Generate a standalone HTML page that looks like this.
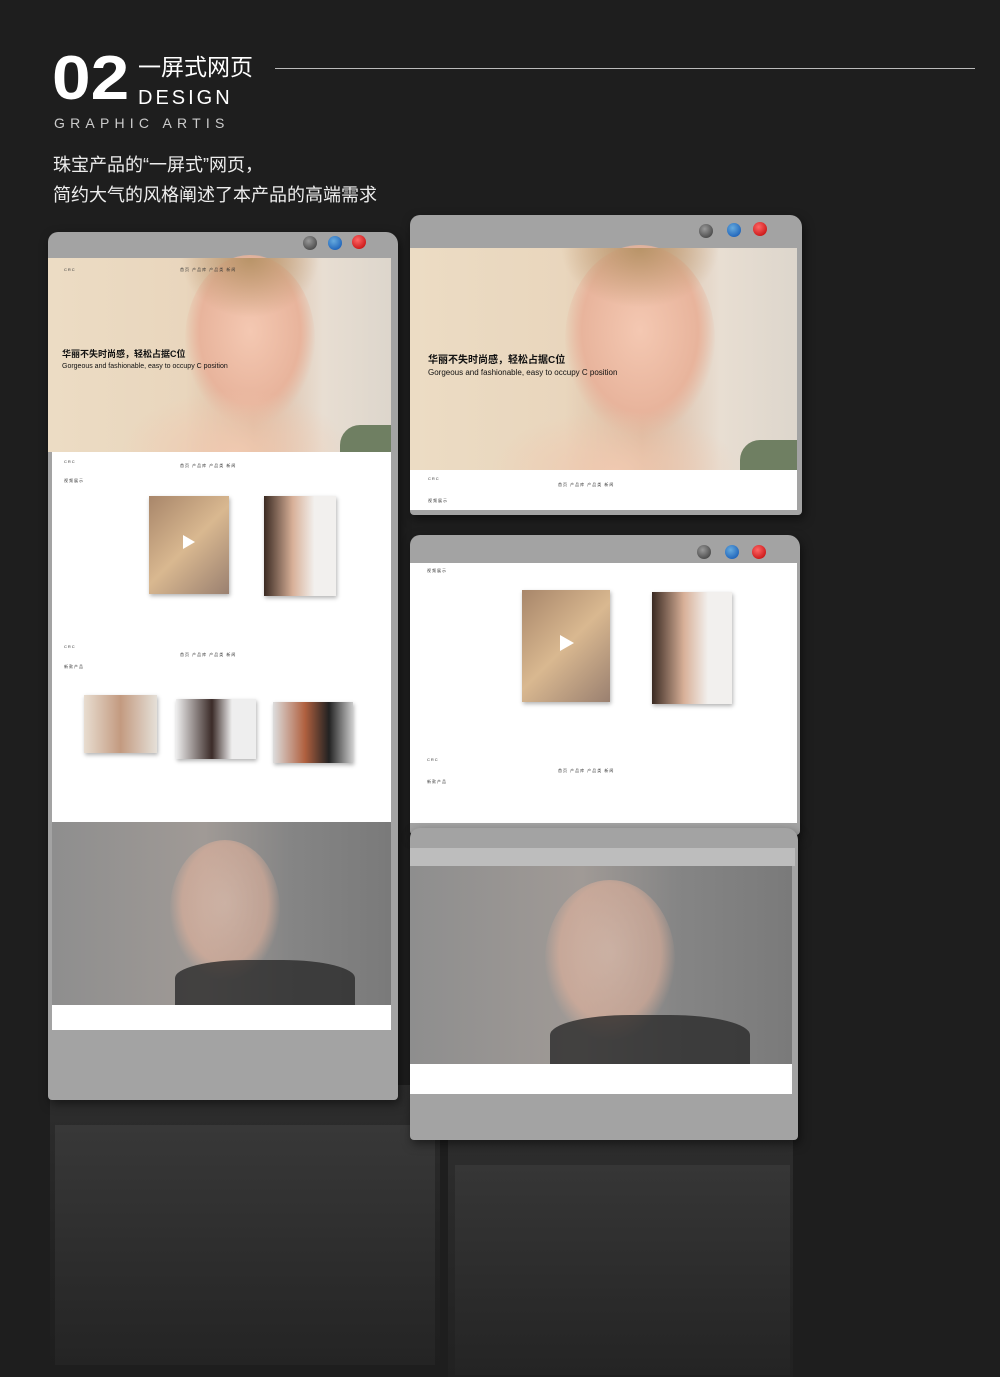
<!DOCTYPE html>
<html><head><meta charset="utf-8"><style>
*{margin:0;padding:0;box-sizing:border-box}
body{width:1000px;height:1377px;background:#1e1e1e;position:relative;overflow:hidden;font-family:"Liberation Sans","Noto Sans CJK SC",sans-serif;color:#fff}
.a{position:absolute}
.frame{position:absolute;background:#a3a3a3;border-radius:10px 12px 4px 4px;box-shadow:2px 4px 10px rgba(0,0,0,.5)}
.btn{position:absolute;width:14px;height:14px;border-radius:50%}
.g{background:radial-gradient(circle at 40% 35%,#999,#333)}
.b{background:radial-gradient(circle at 40% 35%,#6ad,#0a4fb0)}
.r{background:radial-gradient(circle at 40% 35%,#f66,#b00)}
.hero{background:linear-gradient(90deg,#ecdcc4 0%,#e9d6bd 40%,#d9b69c 60%,#e8ded2 80%,#ddd6cc 100%)}
.face{position:absolute;border-radius:50%;background:radial-gradient(ellipse at 50% 45%,#f4c8b2 0%,#e8b49c 55%,rgba(220,170,140,0) 72%)}
.gray{background:linear-gradient(90deg,#8e8e8e,#a09a96 45%,#858585 70%,#7a7a7a)}
.t{position:absolute;color:#111;font-size:8px;font-weight:bold}
.s{position:absolute;color:#333;font-size:4px;letter-spacing:1px}
.ph{position:absolute;box-shadow:1px 2px 4px rgba(0,0,0,.3)}
</style></head><body>
<div class="a" style="left:52px;top:44px;font-size:62px;font-weight:bold;line-height:70px;transform:scaleX(1.12);transform-origin:left">02</div>
<div class="a" style="left:138px;top:53px;font-size:23px;line-height:28px">一屏式网页</div>
<div class="a" style="left:138px;top:86px;font-size:20px;letter-spacing:3px;line-height:24px">DESIGN</div>
<div class="a" style="left:275px;top:68px;width:700px;height:1px;background:#bbb"></div>
<div class="a" style="left:54px;top:115px;font-size:14px;letter-spacing:5.2px;color:#ccc">GRAPHIC ARTIS</div>
<div class="a" style="left:53px;top:150px;font-size:18px;line-height:30px;color:#eee">珠宝产品的“一屏式”网页，<br>简约大气的风格阐述了本产品的高端需求</div>

<!-- reflections -->
<div class="a" style="left:50px;top:1085px;width:390px;height:292px;background:linear-gradient(#2e2e2e,#222 60%,#1e1e1e)"></div>
<div class="a" style="left:55px;top:1125px;width:380px;height:240px;background:linear-gradient(#383838,#242424)"></div>
<div class="a" style="left:448px;top:1125px;width:345px;height:252px;background:linear-gradient(#2e2e2e,#212121)"></div>
<div class="a" style="left:455px;top:1165px;width:335px;height:210px;background:linear-gradient(#363636,#242424)"></div>

<!-- left panel -->
<div class="frame" style="left:48px;top:232px;width:350px;height:868px"></div>
<div class="btn g" style="left:303px;top:236px"></div><div class="btn b" style="left:328px;top:236px"></div><div class="btn r" style="left:352px;top:235px"></div>
<div class="a hero" style="left:48px;top:258px;width:343px;height:194px"></div>
<div class="face" style="left:185px;top:255px;width:130px;height:170px"></div>
<div class="a" style="left:180px;top:258px;width:140px;height:60px;background:radial-gradient(ellipse at 50% 0%,#b89468,rgba(184,148,104,0) 70%)"></div>
<div class="a" style="left:120px;top:390px;width:230px;height:62px;background:radial-gradient(ellipse at 50% 100%,#f0c9b0,rgba(240,200,175,0) 70%)"></div>
<div class="a" style="left:340px;top:425px;width:51px;height:27px;background:#6f7f62;border-radius:20px 0 0 0"></div>
<div class="t" style="left:62px;top:347px;font-size:9px">华丽不失时尚感，轻松占据C位</div>
<div class="t" style="left:62px;top:363px;font-size:7px;font-weight:normal">Gorgeous and fashionable, easy to occupy C position</div>
<div class="s" style="left:64px;top:267px">CRC</div><div class="s" style="left:180px;top:267px">首页 产品库 产品类 新闻</div>
<div class="a" style="left:52px;top:452px;width:339px;height:370px;background:#fff"></div>
<div class="s" style="left:64px;top:459px">CRC</div><div class="s" style="left:180px;top:463px">首页 产品库 产品类 新闻</div>
<div class="s" style="left:64px;top:478px">视频展示</div>
<div class="ph" style="left:149px;top:496px;width:80px;height:98px;background:linear-gradient(135deg,#a8866a,#d9b890 50%,#9a8070)"></div>
<div class="a" style="left:183px;top:535px;border-left:12px solid #fff;border-top:7px solid transparent;border-bottom:7px solid transparent"></div>
<div class="ph" style="left:264px;top:496px;width:72px;height:100px;background:linear-gradient(90deg,#3a2a22,#d8b098 40%,#f2f0ee 70%)"></div>
<div class="s" style="left:64px;top:644px">CRC</div><div class="s" style="left:180px;top:652px">首页 产品库 产品类 新闻</div>
<div class="s" style="left:64px;top:664px">新款产品</div>
<div class="ph" style="left:84px;top:695px;width:73px;height:58px;background:linear-gradient(90deg,#e8ddd0,#c39a80 50%,#e5e0d8)"></div>
<div class="ph" style="left:176px;top:699px;width:80px;height:60px;background:linear-gradient(90deg,#eee,#3b2b28 45%,#eee 70%)"></div>
<div class="ph" style="left:273px;top:702px;width:80px;height:61px;background:linear-gradient(90deg,#ddd,#b0603f 40%,#222 70%,#ccc)"></div>
<div class="a gray" style="left:52px;top:822px;width:339px;height:183px"></div>
<div class="face" style="left:170px;top:840px;width:110px;height:140px;opacity:.55"></div>
<div class="a" style="left:175px;top:960px;width:180px;height:45px;background:#2a2a2a;border-radius:40% 40% 0 0;opacity:.8"></div>
<div class="a" style="left:52px;top:1005px;width:339px;height:25px;background:#fff"></div>

<!-- right top -->
<div class="frame" style="left:410px;top:215px;width:392px;height:300px"></div>
<div class="btn g" style="left:699px;top:224px"></div><div class="btn b" style="left:727px;top:223px"></div><div class="btn r" style="left:753px;top:222px"></div>
<div class="a hero" style="left:410px;top:248px;width:387px;height:222px"></div>
<div class="face" style="left:565px;top:245px;width:150px;height:190px"></div>
<div class="a" style="left:560px;top:248px;width:160px;height:60px;background:radial-gradient(ellipse at 50% 0%,#b89468,rgba(184,148,104,0) 70%)"></div>
<div class="a" style="left:490px;top:410px;width:250px;height:60px;background:radial-gradient(ellipse at 50% 100%,#f0c9b0,rgba(240,200,175,0) 70%)"></div>
<div class="a" style="left:740px;top:440px;width:57px;height:30px;background:#6f7f62;border-radius:20px 0 0 0"></div>
<div class="t" style="left:428px;top:351px;font-size:10px">华丽不失时尚感，轻松占据C位</div>
<div class="t" style="left:428px;top:368px;font-size:8px;font-weight:normal">Gorgeous and fashionable, easy to occupy C position</div>
<div class="a" style="left:410px;top:470px;width:387px;height:40px;background:#fff"></div>
<div class="s" style="left:428px;top:476px">CRC</div><div class="s" style="left:558px;top:482px">首页 产品库 产品类 新闻</div>
<div class="s" style="left:428px;top:498px">视频展示</div>

<!-- right middle -->
<div class="frame" style="left:410px;top:535px;width:390px;height:300px"></div>
<div class="btn g" style="left:697px;top:545px"></div><div class="btn b" style="left:725px;top:545px"></div><div class="btn r" style="left:752px;top:545px"></div>
<div class="a" style="left:410px;top:563px;width:387px;height:260px;background:#fff"></div>
<div class="s" style="left:427px;top:568px">视频展示</div>
<div class="ph" style="left:522px;top:590px;width:88px;height:112px;background:linear-gradient(135deg,#a8866a,#d9b890 50%,#9a8070)"></div>
<div class="a" style="left:560px;top:635px;border-left:14px solid #fff;border-top:8px solid transparent;border-bottom:8px solid transparent"></div>
<div class="ph" style="left:652px;top:592px;width:80px;height:112px;background:linear-gradient(90deg,#3a2a22,#d8b098 40%,#f2f0ee 70%)"></div>
<div class="s" style="left:427px;top:757px">CRC</div><div class="s" style="left:558px;top:768px">首页 产品库 产品类 新闻</div>
<div class="s" style="left:427px;top:779px">新款产品</div>

<!-- right bottom -->
<div class="frame" style="left:410px;top:828px;width:388px;height:312px"></div>
<div class="btn g" style="left:696px;top:851px"></div><div class="btn b" style="left:723px;top:853px"></div><div class="btn r" style="left:750px;top:854px"></div>
<div class="a" style="left:410px;top:848px;width:385px;height:18px;background:#bdbdbd"></div>
<div class="a gray" style="left:410px;top:866px;width:382px;height:198px"></div>
<div class="face" style="left:545px;top:880px;width:130px;height:160px;opacity:.55"></div>
<div class="a" style="left:550px;top:1015px;width:200px;height:50px;background:#2a2a2a;border-radius:40% 40% 0 0;opacity:.8"></div>
<div class="a" style="left:410px;top:1064px;width:382px;height:30px;background:#fff"></div>
</body></html>
